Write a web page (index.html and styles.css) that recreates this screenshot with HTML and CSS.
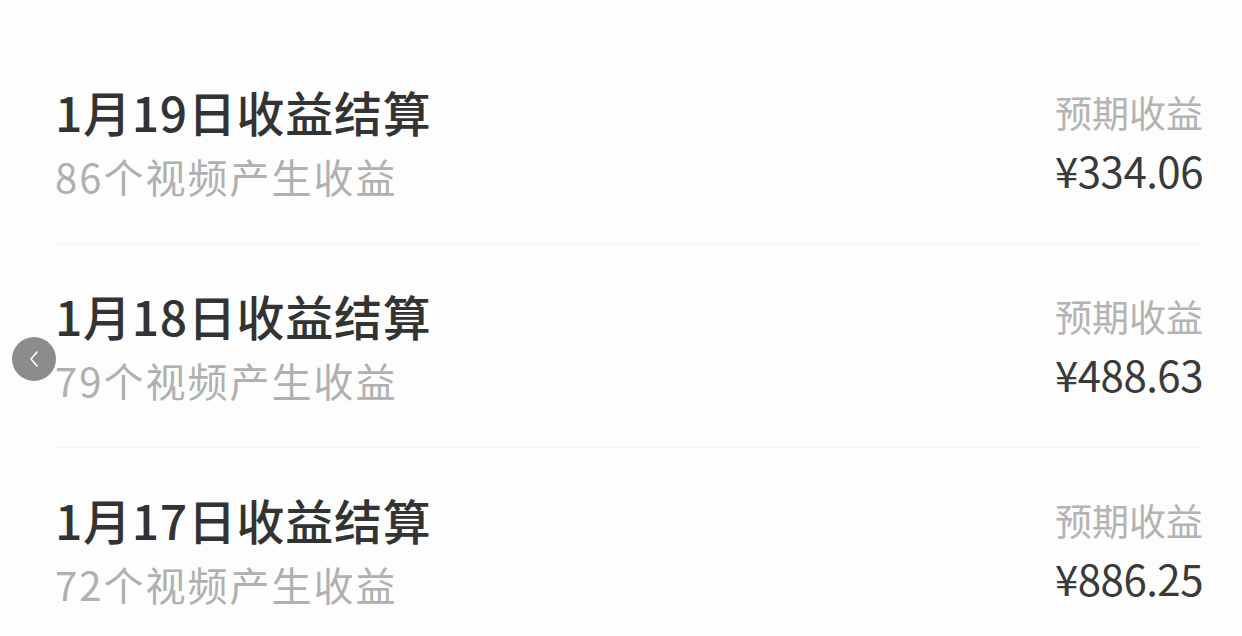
FILE: index.html
```html
<!DOCTYPE html>
<html lang="zh-CN">
<head>
<meta charset="utf-8">
<title>收益结算</title>
<link rel="stylesheet" href="styles.css">
</head>
<body>
<div class="page">
  <ul class="list">
    <li class="row">
      <div class="left">
        <div class="title">1月19日收益结算</div>
        <div class="sub">86个视频产生收益</div>
      </div>
      <div class="right">
        <div class="label">预期收益</div>
        <div class="amount">¥334.06</div>
      </div>
    </li>
    <li class="row">
      <div class="left">
        <div class="title">1月18日收益结算</div>
        <div class="sub">79个视频产生收益</div>
      </div>
      <div class="right">
        <div class="label">预期收益</div>
        <div class="amount">¥488.63</div>
      </div>
    </li>
    <li class="row">
      <div class="left">
        <div class="title">1月17日收益结算</div>
        <div class="sub">72个视频产生收益</div>
      </div>
      <div class="right">
        <div class="label">预期收益</div>
        <div class="amount">¥886.25</div>
      </div>
    </li>
  </ul>
  <button class="back" aria-label="返回">
    <svg width="14" height="20" viewBox="0 0 14 20"><path d="M10 3 L4 10 L10 17" fill="none" stroke="#fff" stroke-width="1.6" stroke-linecap="round" stroke-linejoin="round"/></svg>
  </button>
</div>
</body>
</html>
```

FILE: styles.css
```css
* { box-sizing: border-box; }
html, body {
  margin: 0;
  padding: 0;
  background: #fdfdfd;
  font-family: "Noto Sans CJK SC", "Noto Sans", sans-serif;
}
.page {
  position: relative;
  width: 1242px;
  height: 636px;
  overflow: hidden;
  background: #fdfdfd;
}
.list {
  list-style: none;
  margin: 0;
  padding: 40px 39px 0 55px;
}
.row {
  height: 204px;
  display: flex;
  justify-content: space-between;
  align-items: center;
  border-bottom: 1px solid #f4f4f4;
}
.left {
  display: flex;
  flex-direction: column;
}
.title {
  font-size: 48px;
  line-height: 60px;
  font-weight: 500;
  color: #333;
  letter-spacing: 0.7px;
}
.sub {
  font-size: 40px;
  line-height: 52px;
  color: #b0b0b0;
  margin-top: 9px;
  letter-spacing: 2px;
}
.right {
  display: flex;
  flex-direction: column;
  align-items: flex-end;
}
.label {
  font-size: 37px;
  line-height: 50px;
  color: #b3b3b3;
}
.amount {
  font-size: 42px;
  line-height: 54px;
  color: #3a3a3a;
  margin-top: 6px;
  letter-spacing: -0.5px;
}
.back {
  position: absolute;
  left: 12px;
  top: 337px;
  width: 44px;
  height: 44px;
  border-radius: 50%;
  border: none;
  padding: 0;
  background: #8c8c8c;
  display: flex;
  align-items: center;
  justify-content: center;
}
```
